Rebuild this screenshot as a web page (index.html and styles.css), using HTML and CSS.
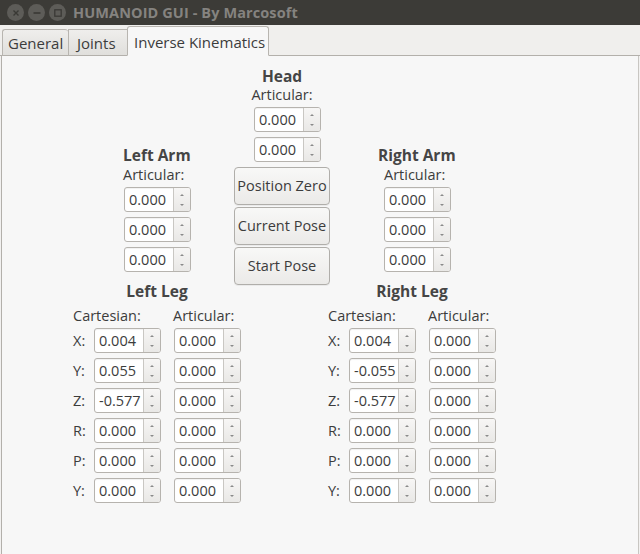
FILE: index.html
```html
<!DOCTYPE html>
<html>
<head>
<meta charset="utf-8">
<link rel="stylesheet" href="styles.css">
</head>
<body>
<div class="window">
  <div class="titlebar">
    <div class="wbtns">
      <span class="wbtn"><svg width="16" height="16" viewBox="0 0 16 16"><path d="M5.5 5.5 L10.5 10.5 M10.5 5.5 L5.5 10.5" stroke="#3a3935" stroke-width="1.4"/></svg></span>
      <span class="wbtn"><svg width="16" height="16" viewBox="0 0 16 16"><path d="M4.5 8 L11.5 8" stroke="#3a3935" stroke-width="1.6"/></svg></span>
      <span class="wbtn"><svg width="16" height="16" viewBox="0 0 16 16"><rect x="4.8" y="4.8" width="6.4" height="6.4" fill="none" stroke="#3a3935" stroke-width="1.3"/></svg></span>
    </div>
    <div class="wtitle">HUMANOID GUI - By Marcosoft</div>
  </div>
  <div class="tabbar">
    <div class="tab">General</div>
    <div class="tab">Joints</div>
    <div class="tab active">Inverse Kinematics</div>
  </div>
  <div class="pane">
    <div class="top">
      <div class="col arm left-arm">
        <div class="heading">Left Arm</div>
        <div class="label">Articular:</div>
        <div class="spins">
          <div class="spin"><span class="val">0.000</span><span class="arrows"><i class="up"></i><i class="dn"></i></span></div>
          <div class="spin"><span class="val">0.000</span><span class="arrows"><i class="up"></i><i class="dn"></i></span></div>
          <div class="spin"><span class="val">0.000</span><span class="arrows"><i class="up"></i><i class="dn"></i></span></div>
        </div>
      </div>
      <div class="col head">
        <div class="heading center">Head</div>
        <div class="label center">Articular:</div>
        <div class="spins head-spins">
          <div class="spin"><span class="val">0.000</span><span class="arrows"><i class="up"></i><i class="dn"></i></span></div>
          <div class="spin"><span class="val">0.000</span><span class="arrows"><i class="up"></i><i class="dn"></i></span></div>
        </div>
        <div class="buttons">
          <div class="btn">Position Zero</div>
          <div class="btn">Current Pose</div>
          <div class="btn">Start Pose</div>
        </div>
      </div>
      <div class="col arm right-arm">
        <div class="heading">Right Arm</div>
        <div class="indent">
          <div class="label">Articular:</div>
          <div class="spins">
            <div class="spin"><span class="val">0.000</span><span class="arrows"><i class="up"></i><i class="dn"></i></span></div>
            <div class="spin"><span class="val">0.000</span><span class="arrows"><i class="up"></i><i class="dn"></i></span></div>
            <div class="spin"><span class="val">0.000</span><span class="arrows"><i class="up"></i><i class="dn"></i></span></div>
          </div>
        </div>
      </div>
    </div>
    <div class="legs">
      <div class="leg">
        <div class="heading center">Left Leg</div>
        <div class="leggrid">
          <div class="label hdr-c">Cartesian:</div><div class="label hdr-a">Articular:</div>
          <div class="rl">X:</div><div class="spin"><span class="val">0.004</span><span class="arrows"><i class="up"></i><i class="dn"></i></span></div><div class="spin"><span class="val">0.000</span><span class="arrows"><i class="up"></i><i class="dn"></i></span></div>
          <div class="rl">Y:</div><div class="spin"><span class="val">0.055</span><span class="arrows"><i class="up"></i><i class="dn"></i></span></div><div class="spin"><span class="val">0.000</span><span class="arrows"><i class="up"></i><i class="dn"></i></span></div>
          <div class="rl">Z:</div><div class="spin"><span class="val">-0.577</span><span class="arrows"><i class="up"></i><i class="dn"></i></span></div><div class="spin"><span class="val">0.000</span><span class="arrows"><i class="up"></i><i class="dn"></i></span></div>
          <div class="rl">R:</div><div class="spin"><span class="val">0.000</span><span class="arrows"><i class="up"></i><i class="dn"></i></span></div><div class="spin"><span class="val">0.000</span><span class="arrows"><i class="up"></i><i class="dn"></i></span></div>
          <div class="rl">P:</div><div class="spin"><span class="val">0.000</span><span class="arrows"><i class="up"></i><i class="dn"></i></span></div><div class="spin"><span class="val">0.000</span><span class="arrows"><i class="up"></i><i class="dn"></i></span></div>
          <div class="rl">Y:</div><div class="spin"><span class="val">0.000</span><span class="arrows"><i class="up"></i><i class="dn"></i></span></div><div class="spin"><span class="val">0.000</span><span class="arrows"><i class="up"></i><i class="dn"></i></span></div>
        </div>
      </div>
      <div class="leg">
        <div class="heading center">Right Leg</div>
        <div class="leggrid">
          <div class="label hdr-c">Cartesian:</div><div class="label hdr-a">Articular:</div>
          <div class="rl">X:</div><div class="spin"><span class="val">0.004</span><span class="arrows"><i class="up"></i><i class="dn"></i></span></div><div class="spin"><span class="val">0.000</span><span class="arrows"><i class="up"></i><i class="dn"></i></span></div>
          <div class="rl">Y:</div><div class="spin"><span class="val">-0.055</span><span class="arrows"><i class="up"></i><i class="dn"></i></span></div><div class="spin"><span class="val">0.000</span><span class="arrows"><i class="up"></i><i class="dn"></i></span></div>
          <div class="rl">Z:</div><div class="spin"><span class="val">-0.577</span><span class="arrows"><i class="up"></i><i class="dn"></i></span></div><div class="spin"><span class="val">0.000</span><span class="arrows"><i class="up"></i><i class="dn"></i></span></div>
          <div class="rl">R:</div><div class="spin"><span class="val">0.000</span><span class="arrows"><i class="up"></i><i class="dn"></i></span></div><div class="spin"><span class="val">0.000</span><span class="arrows"><i class="up"></i><i class="dn"></i></span></div>
          <div class="rl">P:</div><div class="spin"><span class="val">0.000</span><span class="arrows"><i class="up"></i><i class="dn"></i></span></div><div class="spin"><span class="val">0.000</span><span class="arrows"><i class="up"></i><i class="dn"></i></span></div>
          <div class="rl">Y:</div><div class="spin"><span class="val">0.000</span><span class="arrows"><i class="up"></i><i class="dn"></i></span></div><div class="spin"><span class="val">0.000</span><span class="arrows"><i class="up"></i><i class="dn"></i></span></div>
        </div>
      </div>
    </div>
  </div>
</div>
</body>
</html>
```

FILE: styles.css
```css
* { box-sizing: border-box; }
html, body { margin: 0; padding: 0; }
body {
  width: 640px; height: 554px; overflow: hidden;
  font-family: "Open Sans", "DejaVu Sans", sans-serif;
  font-size: 14.5px; color: #3c3c3c;
  background: #f2f1f0;
}
.window { display: flex; flex-direction: column; height: 554px; }
.titlebar {
  height: 25px; background: #3c3b37;
  display: flex; align-items: center; flex-shrink: 0;
}
.wbtns { display: flex; gap: 4px; padding-left: 7px; }
.wbtn {
  width: 17px; height: 17px; border-radius: 50%;
  background: #5d5c58; display: flex; align-items: center; justify-content: center;
}
.wbtn svg { display: block; }
.wtitle {
  margin-left: 7px; font-weight: bold; font-size: 14.5px; letter-spacing: 0.1px; color: #858380;
  white-space: nowrap;
}
.tabbar {
  height: 31px; flex-shrink: 0; display: flex; align-items: flex-end;
  padding-left: 2px; background: #f0efed;
  border-bottom: 1px solid #b3b0ab;
}
.tab {
  height: 27px; padding: 0 5px; line-height: 26px;
  border: 1px solid #b8b5b0; border-right: none;
  border-radius: 3px 3px 0 0;
  background: linear-gradient(#efeeec, #e0dfdc);
  margin-bottom: -1px; border-bottom: 1px solid #b3b0ab;
  font-size: 15px; white-space: nowrap;
}
.tab:nth-child(1) { width: 66px; }
.tab:nth-child(2) { width: 59px; padding-left: 8px; border-radius: 0; }
.tab.active {
  width: 142px; height: 30px; line-height: 30px; padding: 0 0 0 6px;
  background: #f7f7f7; border-right: 1px solid #b8b5b0;
  border-bottom: 1px solid #f7f7f7;
}
.pane {
  flex: 1; background: #f7f7f7;
  border-left: 1px solid #b3b0ab; border-right: 1px solid #c8c6c2;
  margin: 0 1px 0 1px;
}
.top { display: flex; align-items: flex-start; padding-left: 121px; padding-top: 11px; }
.col { display: flex; flex-direction: column; }
.heading { font-weight: bold; font-size: 15.5px; line-height: 18px; color: #454545; white-space: nowrap; }
.label { line-height: 18px; white-space: nowrap; }
.center { text-align: center; }
.left-arm { width: 68px; margin-top: 79px; }
.left-arm .spins { margin-left: 1px; }
.arm .label { margin-top: 2px; }
.arm .spins { margin-top: 3px; }
.head { width: 96px; margin-left: 43px; }
.head .label { margin-top: 1px; }
.right-arm { margin-left: 48px; margin-top: 79px; }
.indent { padding-left: 6px; }
.spins { display: flex; flex-direction: column; gap: 5px; margin-top: 4px; }
.head-spins { margin-left: 20px; margin-top: 3px; }
.spin {
  width: 67px; height: 25px; display: flex;
  border: 1px solid #b6b3ae; border-radius: 3px; background: #fff;
  box-shadow: inset 0 1px 1px rgba(0,0,0,0.06);
}
.val { flex: 1; padding-left: 4px; line-height: 23px; font-size: 14.5px; color: #3c3c3c; white-space: nowrap; overflow: hidden; }
.arrows {
  width: 17px; border-left: 1px solid #c9c7c3;
  background: linear-gradient(#f7f6f5, #e9e8e6);
  border-radius: 0 2px 2px 0;
  display: flex; flex-direction: column; justify-content: space-between; align-items: center;
  padding: 6px 0 5px;
}
.arrows i { display: block; width: 0; height: 0; border-left: 2px solid transparent; border-right: 2px solid transparent; }
.arrows .up { border-bottom: 2px solid #8a8a8a; }
.arrows .dn { border-top: 2px solid #8a8a8a; }
.buttons { display: flex; flex-direction: column; gap: 2px; margin-top: 5px; }
.btn {
  height: 38px; line-height: 36px; text-align: center;
  border: 1px solid #b0aeaa; border-radius: 4px;
  background: linear-gradient(#f8f8f7, #ebeae8);
  box-shadow: 0 1px 0 rgba(0,0,0,0.05);
  white-space: nowrap;
}
.legs { display: flex; padding-left: 71px; gap: 87px; margin-top: -3px; }
.leg { width: 168px; display: flex; flex-direction: column; }
.leggrid {
  display: grid; grid-template-columns: 21px 80px 67px;
  row-gap: 5px; margin-top: 7px;
}
.hdr-c { grid-column: 1 / 3; margin-bottom: -2px; }
.hdr-a { margin-left: -1px; margin-bottom: -2px; }
.rl { line-height: 25px; }
```
